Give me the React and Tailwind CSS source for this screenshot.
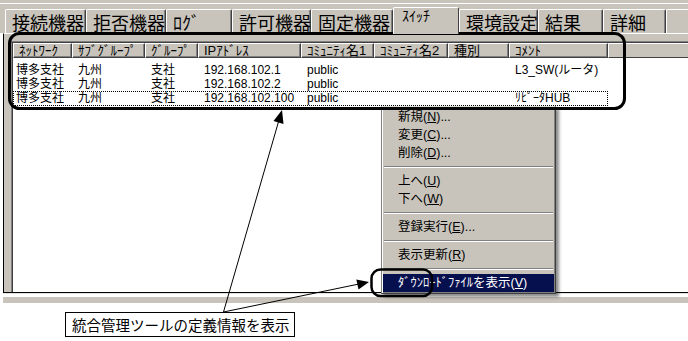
const tabs = [
  { label: "接続機器", w: "w-[81px]" },
  { label: "拒否機器", w: "w-[80px]" },
  { label: "ﾛｸﾞ", w: "w-[66px]" },
  { label: "許可機器", w: "w-[79px]" },
  { label: "固定機器", w: "w-[82px]" },
  { label: "ｽｲｯﾁ", w: "w-[66px]", active: true },
  { label: "環境設定", w: "w-[79px]" },
  { label: "結果", w: "w-[65px]" },
  { label: "詳細", w: "w-[63px]" },
  { label: "", w: "w-[40px]" },
];

const cols = [
  { w: "w-[59px]", label: "ﾈｯﾄﾜｰｸ" },
  { w: "w-[73px]", label: "ｻﾌﾞｸﾞﾙｰﾌﾟ" },
  { w: "w-[53px]", label: "ｸﾞﾙｰﾌﾟ" },
  { w: "w-[103px]", label: "IPｱﾄﾞﾚｽ" },
  { w: "w-[73px]", label: "ｺﾐｭﾆﾃｨ名1" },
  { w: "w-[74px]", label: "ｺﾐｭﾆﾃｨ名2" },
  { w: "w-[61px]", label: "種別" },
  { w: "w-[99px]", label: "ｺﾒﾝﾄ" },
];

const rows = [
  ["博多支社", "九州", "支社", "192.168.102.1", "public", "", "", "L3_SW(ルータ)"],
  ["博多支社", "九州", "支社", "192.168.102.2", "public", "", "", ""],
  ["博多支社", "九州", "支社", "192.168.102.100", "public", "", "", "ﾘﾋﾟｰﾀHUB"],
];

// null = separator
const menu = [
  { text: "新規", key: "N", after: "..." },
  { text: "変更", key: "C", after: "..." },
  { text: "削除", key: "D", after: "..." },
  null,
  { text: "上へ", key: "U" },
  { text: "下へ", key: "W" },
  null,
  { text: "登録実行", key: "E", after: "..." },
  null,
  { text: "表示更新", key: "R" },
  null,
  { text: "ﾀﾞｳﾝﾛｰﾄﾞﾌｧｲﾙを表示", key: "V", selected: true },
];

function Tab({ tab }) {
  if (tab.active) {
    return (
      <div
        className={`${tab.w} relative z-10 -mb-px h-[27px] shrink-0 rounded-t-[2px] border-t border-l border-r border-t-white border-l-white border-r-[#404040] bg-[#c8c4bb] pl-[8px] text-[14px] leading-[15px]`}
      >
        {tab.label}
      </div>
    );
  }
  return (
    <div
      className={`${tab.w} h-[24px] shrink-0 rounded-t-[2px] border-t border-l border-r border-t-white border-l-white border-r-[#404040] pl-[6px] pt-px text-[18px] leading-[22px] whitespace-nowrap shadow-[inset_-1px_0_0_#808080]`}
    >
      {tab.label}
    </div>
  );
}

function ListView() {
  return (
    <div className="min-h-0 flex-1 border-t border-l border-t-[#808080] border-l-[#808080] bg-white">
      <div className="h-full border-t border-l border-t-[#404040] border-l-[#404040] font-['Liberation_Sans','Noto_Sans_CJK_JP',sans-serif]">
        <div className="flex">
          {cols.map((c) => (
            <div
              key={c.label}
              className={`${c.w} h-[15px] shrink-0 overflow-hidden whitespace-nowrap border-t border-l border-r border-b border-t-white border-l-white border-r-[#404040] border-b-[#404040] bg-[#c8c4bb] pl-[5px] text-[13px] leading-[13px] shadow-[inset_-1px_-1px_0_#808080]`}
            >
              {c.label}
            </div>
          ))}
          <div className="h-[15px] flex-1 border-t border-l border-b border-t-white border-l-white border-b-[#404040] bg-[#c8c4bb]" />
        </div>

        <div className="pt-[5px] text-[12px]">
          {rows.map((r, i) =>
            i === 2 ? (
              <div
                key={i}
                className="flex h-[15px] w-[595px] border border-dotted border-black leading-[13px]"
              >
                {r.map((cell, j) => (
                  <div
                    key={j}
                    className={`${j === 0 ? "w-[58px] pl-[2px]" : cols[j].w + " pl-[6px]"} shrink-0 whitespace-nowrap`}
                  >
                    {cell}
                  </div>
                ))}
              </div>
            ) : (
              <div key={i} className="flex h-[14px] leading-[14px]">
                {r.map((cell, j) => (
                  <div
                    key={j}
                    className={`${cols[j].w} ${j === 0 ? "pl-[3px]" : "pl-[6px]"} shrink-0 whitespace-nowrap`}
                  >
                    {cell}
                  </div>
                ))}
              </div>
            )
          )}
        </div>
      </div>
    </div>
  );
}

function ContextMenu() {
  return (
    <div className="absolute top-[106px] left-[381px] w-[175px] border border-t-[#e4e1da] border-l-[#808080] border-r-[#404040] border-b-[#404040] bg-[#c8c4bb] p-px font-['Liberation_Sans','Noto_Sans_CJK_JP',sans-serif] text-[12.5px] shadow-[inset_1px_1px_0_#ffffff,inset_-1px_-1px_0_#808080,3px_3px_3px_rgba(0,0,0,0.45)]">
      {menu.map((m, i) =>
        m === null ? (
          <div key={i} className="flex h-[10px] items-center px-px">
            <div className="h-[2px] w-full border-t border-b border-t-[#808080] border-b-white" />
          </div>
        ) : (
          <div
            key={i}
            className={`h-[18px] pl-[15px] leading-[18px] whitespace-nowrap ${
              m.selected ? "bg-[#06104e] text-white" : "text-black"
            }`}
          >
            {m.text}(<u>{m.key}</u>){m.after}
          </div>
        )
      )}
    </div>
  );
}

export default function App() {
  return (
    <div className="relative h-[341px] w-[688px] overflow-hidden bg-white font-['Noto_Sans_CJK_JP',sans-serif] text-black">
      {/* tab strip */}
      <div className="flex h-[33px] flex-col bg-[#c8c4bb]">
        <div className="h-[3px]" />
        <div className="h-px bg-white" />
        <div className="flex flex-1 items-end pl-[5px]">
          {tabs.map((t, i) => (
            <Tab key={i} tab={t} />
          ))}
        </div>
      </div>

      {/* panel */}
      <div className="flex">
        <div className="w-[3px] shrink-0" />
        <div className="flex-1">
          <div className="flex h-[260px] flex-col border-t border-l border-b border-t-white border-l-black border-b-black bg-[#c8c4bb] pt-[7px] pl-[7px]">
            <ListView />
          </div>
          <div className="h-px bg-[#e6e3dd]" />
          <div className="h-[3px]" />
          <div className="h-[6px] bg-[#c8c4bb]" />
        </div>
      </div>

      <ContextMenu />

      {/* annotations */}
      <svg
        className="pointer-events-none absolute inset-0"
        width="688"
        height="341"
        viewBox="0 0 688 341"
      >
        <rect x="9.5" y="33.5" width="615" height="75" rx="10" fill="none" stroke="#000" strokeWidth="3" />
        <rect x="371.5" y="269.5" width="60.5" height="26.5" rx="9" fill="none" stroke="#000" strokeWidth="2.5" />
        <line x1="223.5" y1="312" x2="279" y2="120" stroke="#000" strokeWidth="1" />
        <polygon points="282,110 283.5,124 273.5,121" fill="#000" />
        <line x1="223.5" y1="312" x2="359" y2="284" stroke="#000" strokeWidth="1" />
        <polygon points="369,282 358.5,289.5 356.3,279.5" fill="#000" />
      </svg>

      <div className="absolute top-[312px] left-[65px] h-[25px] w-[230px] border border-black bg-white pl-[6px] text-[14.5px] leading-[23px] whitespace-nowrap">
        統合管理ツールの定義情報を表示
      </div>
    </div>
  );
}
